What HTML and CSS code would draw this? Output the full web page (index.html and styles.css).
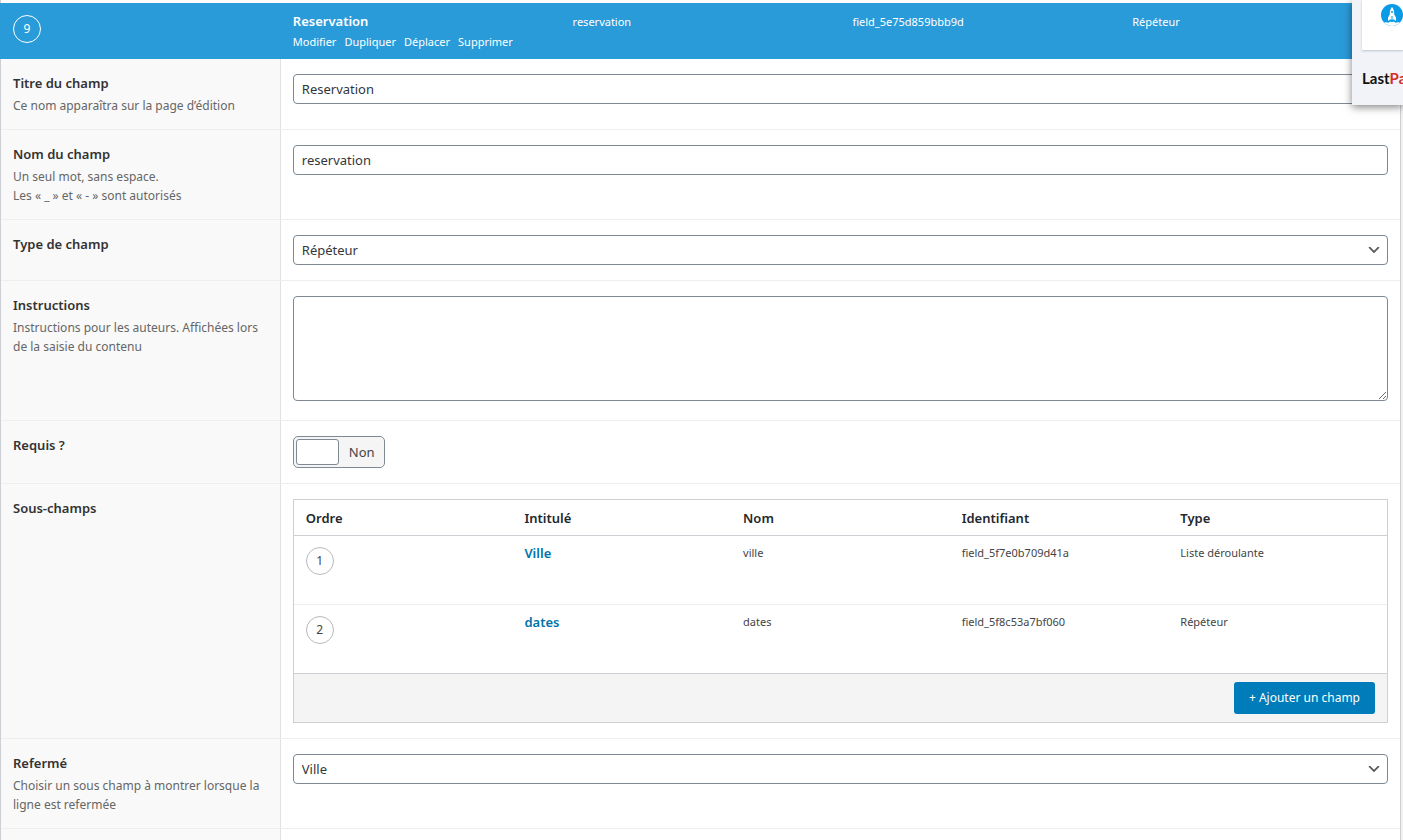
FILE: index.html
```html
<!DOCTYPE html>
<html lang="fr">
<head>
<meta charset="utf-8">
<title>Groupe de champs</title>
<link rel="stylesheet" href="styles.css">
</head>
<body>
<main class="panel">
  <header class="field-head">
    <div class="cell"><span class="badge badge-light">9</span></div>
    <div class="cell">
      <strong class="field-name">Reservation</strong>
      <nav class="actions">
        <a href="#">Modifier</a>
        <a href="#">Dupliquer</a>
        <a href="#">Déplacer</a>
        <a href="#">Supprimer</a>
      </nav>
    </div>
    <div class="cell meta">reservation</div>
    <div class="cell meta">field_5e75d859bbb9d</div>
    <div class="cell meta">Répéteur</div>
  </header>

  <section class="row">
    <div class="label">
      <label for="f-label">Titre du champ</label>
      <p>Ce nom apparaîtra sur la page d’édition</p>
    </div>
    <div class="input"><input class="control" id="f-label" type="text" value="Reservation"></div>
  </section>

  <section class="row">
    <div class="label">
      <label for="f-name">Nom du champ</label>
      <p>Un seul mot, sans espace.<br>Les « _ » et « - » sont autorisés</p>
    </div>
    <div class="input"><input class="control" id="f-name" type="text" value="reservation"></div>
  </section>

  <section class="row">
    <div class="label"><label for="f-type">Type de champ</label></div>
    <div class="input select-wrap">
      <select class="control" id="f-type"><option>Répéteur</option></select>
      <svg class="chevron" viewBox="0 0 20 20"><path d="M5 6l5 5 5-5 2 1-7 7-7-7 2-1z"/></svg>
    </div>
  </section>

  <section class="row">
    <div class="label">
      <label for="f-instr">Instructions</label>
      <p>Instructions pour les auteurs. Affichées lors de la saisie du contenu</p>
    </div>
    <div class="input"><textarea class="control area" id="f-instr"></textarea></div>
  </section>

  <section class="row">
    <div class="label"><label for="f-req">Requis ?</label></div>
    <div class="input">
      <label class="switch">
        <input id="f-req" type="checkbox">
        <span class="knob"></span>
        <span class="state">Non</span>
      </label>
    </div>
  </section>

  <section class="row">
    <div class="label"><span class="title">Sous-champs</span></div>
    <div class="input">
      <div class="subfields">
        <table>
          <thead>
            <tr><th>Ordre</th><th>Intitulé</th><th>Nom</th><th>Identifiant</th><th>Type</th></tr>
          </thead>
          <tbody>
            <tr>
              <td><span class="badge">1</span></td>
              <td><a class="sub-link" href="#">Ville</a></td>
              <td>ville</td>
              <td>field_5f7e0b709d41a</td>
              <td>Liste déroulante</td>
            </tr>
            <tr>
              <td><span class="badge">2</span></td>
              <td><a class="sub-link" href="#">dates</a></td>
              <td>dates</td>
              <td>field_5f8c53a7bf060</td>
              <td>Répéteur</td>
            </tr>
          </tbody>
        </table>
        <footer class="sub-foot"><button class="add" type="button">+ Ajouter un champ</button></footer>
      </div>
    </div>
  </section>

  <section class="row">
    <div class="label">
      <label for="f-collapsed">Refermé</label>
      <p>Choisir un sous champ à montrer lorsque la ligne est refermée</p>
    </div>
    <div class="input select-wrap">
      <select class="control" id="f-collapsed"><option>Ville</option></select>
      <svg class="chevron" viewBox="0 0 20 20"><path d="M5 6l5 5 5-5 2 1-7 7-7-7 2-1z"/></svg>
    </div>
  </section>

  <section class="row row-rest">
    <div class="label"></div>
    <div class="input"></div>
  </section>
</main>

<aside class="popup">
  <div class="popup-card">
    <svg class="rocket" viewBox="0 0 22 22">
      <circle cx="11" cy="11" r="11" fill="#0a9be6"/>
      <path fill="#fff" d="M11 3C9.300 5 8.600 7.500 8.800 10.500L7 13.500V17l2-1.500h4l2 1.500v-3.500l-1.800-3C13.400 7.500 12.700 5 11 3z"/>
      <path stroke="#0a9be6" d="M11 12v3.500"/>
      <circle cx="11" cy="8" r="1" fill="#0a9be6"/>
      <path fill="#fff" d="M3.200 18.800c1.800-.8 3-.6 4 .2 1-1.200 2.300-1.500 3.800-.8 1.500-.7 2.800-.4 3.800.8 1-.8 2.200-1 4-.2C14.500 23 7.500 23 3.200 18.800z"/>
    </svg>
  </div>
  <div class="brand">Last<span>Pa</span></div>
</aside>
</body>
</html>
```
FILE: styles.css
```css
* {
  box-sizing: border-box;
}

body {
  margin: 0;
  position: relative;
  overflow-x: hidden;
  background: #f1f1f1;
  color: #444;
  font: 13px/18px "Noto Sans", "Open Sans", sans-serif;
}

a {
  color: inherit;
  text-decoration: none;
}

.panel {
  display: flex;
  flex-direction: column;
  min-height: 100vh;
  margin-right: 2px;
  padding-top: 3px;
  border: solid #ccd0d4;
  border-width: 0 1px;
  background: #fff;
}

/* Field header */
.field-head {
  display: grid;
  grid-template-columns: repeat(5, 20%);
  height: 56px;
  margin-left: -1px;
  padding-left: 1px;
  background: #2a9bd9;
  color: #fff;
}

.cell {
  padding: 9px 12px 0;
}

.cell:first-child {
  padding-top: 12px;
}

.meta {
  padding-top: 10px;
  font-size: 11px;
}

.field-name {
  display: block;
  font-weight: 600;
}

.actions {
  display: flex;
  gap: 8px;
  padding-top: 3px;
  font-size: 11px;
}

.badge {
  display: flex;
  align-items: center;
  justify-content: center;
  width: 28px;
  height: 28px;
  border: 1px solid #b4b9be;
  border-radius: 50%;
  color: #444;
  font-size: 12px;
}

.badge-light {
  border-color: #fff;
  color: #fff;
}

/* Setting rows */
.row {
  display: grid;
  grid-template-columns: 20% 80%;
}

.row + .row {
  border-top: 1px solid #eee;
}

.row-rest {
  flex: 1;
}

.label {
  padding: 15px 12px 14px;
  border-right: 1px solid #e1e1e1;
  background: #f9f9f9;
}

.label label,
.title {
  display: block;
  color: #333;
  font-weight: 600;
}

.label p {
  margin: 4px 0 0;
  color: #666;
  font-size: 12px;
  line-height: 19px;
}

.input {
  padding: 15px 12px;
}

.row-rest .label,
.row-rest .input {
  padding: 0;
}

.control {
  display: block;
  width: 100%;
  height: 30px;
  margin: 0;
  padding: 0 8px;
  border: 1px solid #7e8993;
  border-radius: 4px;
  background: #fff;
  color: #32373c;
  font: inherit;
}

select.control {
  appearance: none;
}

.area {
  height: 105px;
  margin-bottom: 4px;
  resize: vertical;
}

.select-wrap {
  position: relative;
}

.chevron {
  position: absolute;
  top: 22px;
  right: 18px;
  width: 16px;
  height: 16px;
  fill: #555;
  pointer-events: none;
}

.switch {
  display: inline-flex;
  align-items: center;
  height: 32px;
  padding: 0 9px 0 2px;
  border: 1px solid #7e8993;
  border-radius: 5px;
  background: #f5f5f5;
  vertical-align: top;
}

.switch input {
  position: absolute;
  opacity: 0;
}

.knob {
  width: 43px;
  height: 26px;
  margin-right: 10px;
  border: 1px solid #7e8993;
  border-radius: 3px;
  background: #fff;
}

/* Sub-field table */
.subfields {
  border: 1px solid #ccd0d4;
}

table {
  width: 100%;
  border-collapse: separate;
  border-spacing: 0;
  table-layout: fixed;
}

th {
  height: 36px;
  padding: 0 12px;
  border-bottom: 1px solid #ccd0d4;
  color: #23282d;
  font-weight: 600;
  text-align: left;
}

td {
  height: 69px;
  padding: 8px 12px 0;
  border-top: 1px solid #eee;
  font-size: 11px;
  vertical-align: top;
}

td:first-child {
  padding-top: 11px;
}

tbody tr:first-child td {
  height: 68px;
  border-top: 0;
}

.sub-link {
  color: #0073aa;
  font-size: 13px;
  font-weight: 600;
}

.sub-foot {
  display: flex;
  justify-content: flex-end;
  padding: 8px 12px;
  border-top: 1px solid #ccd0d4;
  background: #f4f4f4;
}

.add {
  height: 32px;
  padding: 0 15px;
  border: 0;
  border-radius: 3px;
  background: #007cba;
  color: #fff;
  font: inherit;
  font-size: 12px;
}

/* Extension popup, cut by the window edge */
.popup {
  position: absolute;
  top: 0;
  right: 0;
  width: 51px;
  height: 105px;
  padding-left: 10px;
  overflow: hidden;
  background: #f1f3f8;
  box-shadow: 0 2px 8px rgba(0, 0, 0, 0.5);
}

.popup-card {
  height: 50px;
  padding: 4px 0 0 19px;
  background: #fff;
  box-shadow: 0 1px 2px rgba(60, 90, 120, 0.3);
}

.rocket {
  display: block;
  width: 22px;
  height: 22px;
}

.brand {
  padding-top: 19px;
  color: #111;
  font: 700 15px/18px Lato, sans-serif;
}

.brand span {
  color: #d32d27;
}
```
